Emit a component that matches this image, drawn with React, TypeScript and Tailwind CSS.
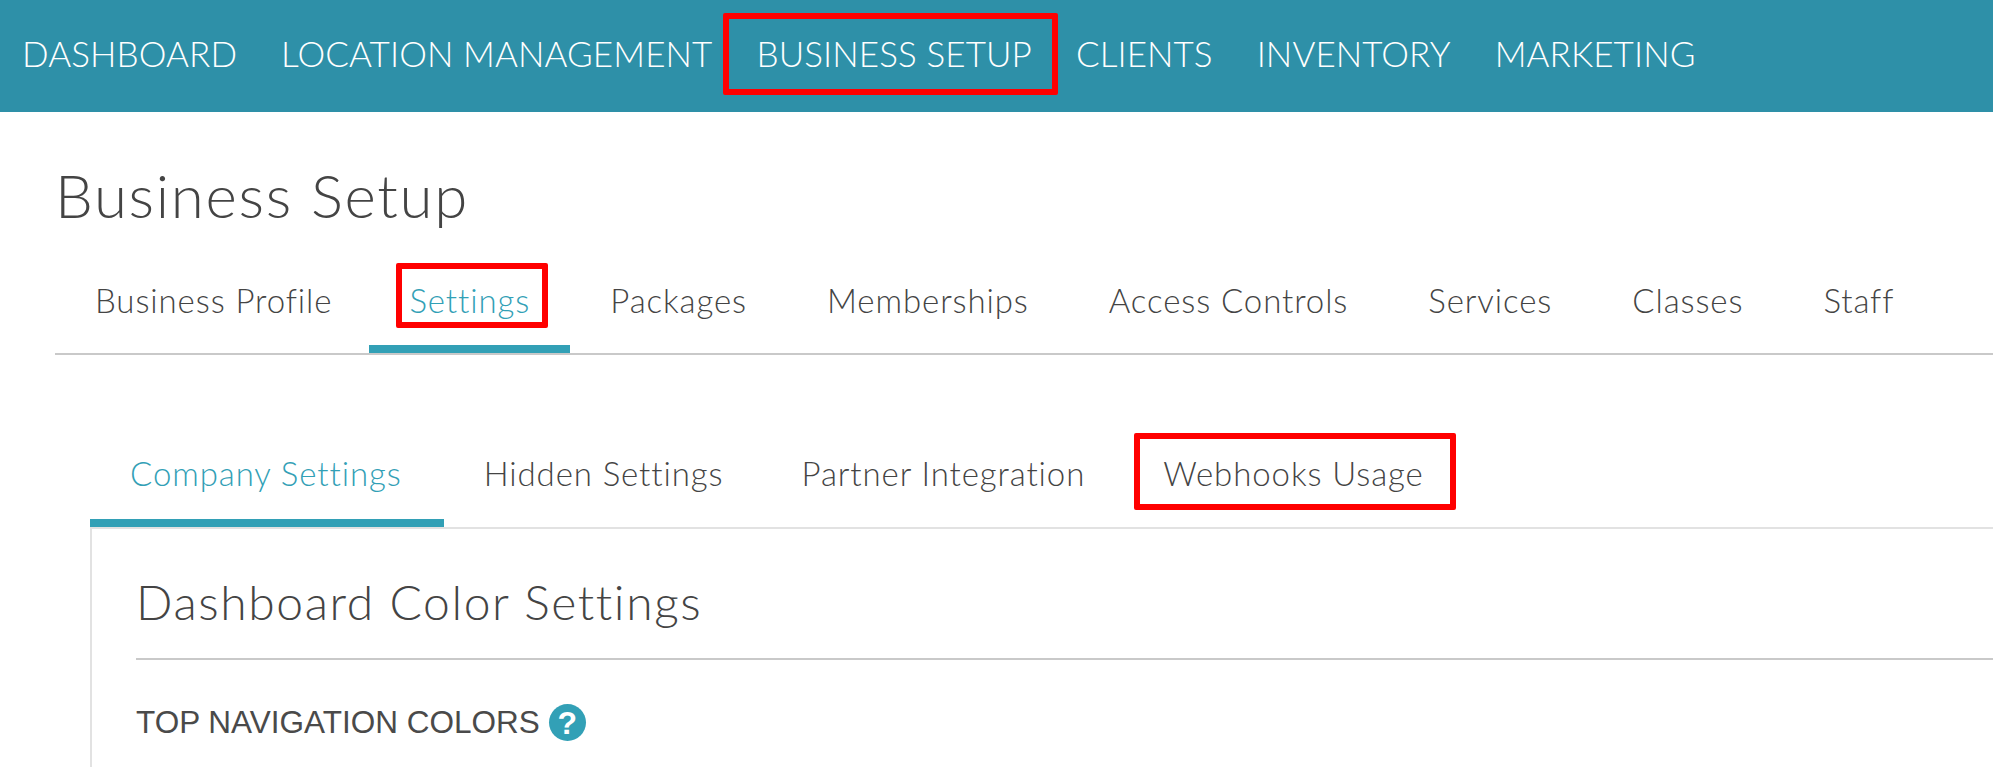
const topNav = ["DASHBOARD", "LOCATION MANAGEMENT", "BUSINESS SETUP", "CLIENTS", "INVENTORY", "MARKETING"];
const mainTabs = ["Business Profile", "Settings", "Packages", "Memberships", "Access Controls", "Services", "Classes", "Staff"];
const subTabs = ["Company Settings", "Hidden Settings", "Partner Integration", "Webhooks Usage"];

function RedBox({ className }: { className: string }) {
  return <div className={`absolute border-[6px] border-[#ff0000] rounded-[2px] pointer-events-none ${className}`} />;
}

export default function App() {
  return (
    <div className="w-[1993px] h-[767px] overflow-hidden bg-white font-['Lato',sans-serif] text-[#444444] font-light">
      {/* top nav */}
      <nav className="h-[112px] bg-[#2e90a8] flex items-center pl-[22px] pb-[5px] gap-[44px]">
        {topNav.map((item) => (
          <a key={item} className="relative text-white text-[35px] tracking-[0.1px] leading-none whitespace-nowrap">
            {item}
            {item === "BUSINESS SETUP" && <RedBox className="-left-[33px] -right-[26px] -top-[23px] -bottom-[24px]" />}
          </a>
        ))}
      </nav>

      <div className="pl-[55px]">
        <h1 className="pt-[48px] text-[60px] leading-[70px] font-light tracking-[1.7px]">Business Setup</h1>

        {/* main tabs */}
        <div className="h-[125px] flex items-end border-b-2 border-[#c9c9c9]">
          {mainTabs.map((tab) => (
            <a
              key={tab}
              className={`relative h-[80px] flex items-center pl-[40px] pb-[18px] text-[33px] tracking-[0.9px] leading-none whitespace-nowrap border-b-8 ${
                tab === "Business Profile" ? "pr-[37px]" : "pr-[40px]"
              } ${tab === "Settings" ? "text-[#32a0b6] border-[#32a0b6]" : "border-transparent"}`}
            >
              {tab}
              {tab === "Settings" && <RedBox className="left-[27px] right-[22px] top-[-10px] bottom-[17px]" />}
            </a>
          ))}
        </div>

        {/* sub tabs */}
        <div className="ml-[35px] mt-[85px]">
          <div className="flex items-end h-[87px]">
            {subTabs.map((tab) => (
              <a
                key={tab}
                className={`relative h-[87px] flex items-center pl-[40px] pb-[13px] text-[33px] tracking-[0.9px] leading-none whitespace-nowrap border-b-8 ${
                  tab === "Company Settings"
                    ? "pr-[42px] text-[#32a0b6] border-[#32a0b6]"
                    : tab === "Hidden Settings" || tab === "Partner Integration"
                      ? "pr-[38px] border-transparent"
                      : "pr-[40px] border-transparent"
                }`}
              >
                {tab}
                {tab === "Webhooks Usage" && <RedBox className="left-[11px] right-[8px] top-[-7px] bottom-[9px]" />}
              </a>
            ))}
          </div>

          {/* panel */}
          <div className="border-l-2 border-t-2 border-[#e2e2e2] pl-[44px] h-[300px]">
            <h2 className="pt-[48px] text-[48px] leading-[50px] font-light tracking-[1.6px]">Dashboard Color Settings</h2>
            <div className="mt-[31px] h-[2px] bg-[#c9c9c9]" />
            <div className="mt-[44px] flex items-center gap-[9px]">
              <span className="font-['Liberation_Sans',sans-serif] font-normal text-[31.5px] leading-[37px] text-[#4a4a4a] whitespace-nowrap">
                TOP NAVIGATION COLORS
              </span>
              <span className="w-[37px] h-[37px] rounded-full bg-[#32a0b6] flex items-center justify-center text-white font-['Liberation_Sans',sans-serif] font-bold text-[32px] leading-none">
                ?
              </span>
            </div>
          </div>
        </div>
      </div>
    </div>
  );
}
